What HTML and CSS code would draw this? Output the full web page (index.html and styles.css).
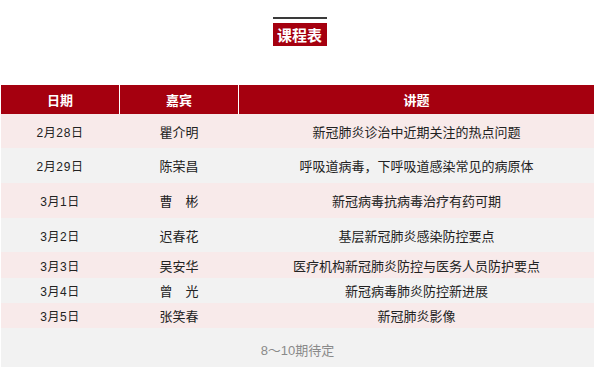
FILE: index.html
```html
<!DOCTYPE html>
<html lang="zh-CN">
<head>
<meta charset="utf-8">
<title>课程表</title>
<link rel="stylesheet" href="styles.css">
</head>
<body>
<div class="page">
  <div class="title-wrap">
    <div class="title-line"></div>
    <div class="title">课程表</div>
  </div>
  <div class="table">
    <div class="row head">
      <div class="cell">日期</div>
      <div class="cell">嘉宾</div>
      <div class="cell">讲题</div>
    </div>
    <div class="row pink tall">
      <div class="cell date">2月28日</div>
      <div class="cell name">瞿介明</div>
      <div class="cell topic">新冠肺炎诊治中近期关注的热点问题</div>
    </div>
    <div class="row grey taller">
      <div class="cell date">2月29日</div>
      <div class="cell name">陈荣昌</div>
      <div class="cell topic">呼吸道病毒，下呼吸道感染常见的病原体</div>
    </div>
    <div class="row pink taller">
      <div class="cell date">3月1日</div>
      <div class="cell name">曹　彬</div>
      <div class="cell topic">新冠病毒抗病毒治疗有药可期</div>
    </div>
    <div class="row grey tall">
      <div class="cell date">3月2日</div>
      <div class="cell name">迟春花</div>
      <div class="cell topic">基层新冠肺炎感染防控要点</div>
    </div>
    <div class="row pink mid">
      <div class="cell date">3月3日</div>
      <div class="cell name">吴安华</div>
      <div class="cell topic">医疗机构新冠肺炎防控与医务人员防护要点</div>
    </div>
    <div class="row grey short">
      <div class="cell date">3月4日</div>
      <div class="cell name">曾　光</div>
      <div class="cell topic">新冠病毒肺炎防控新进展</div>
    </div>
    <div class="row pink short">
      <div class="cell date">3月5日</div>
      <div class="cell name">张笑春</div>
      <div class="cell topic">新冠肺炎影像</div>
    </div>
    <div class="footer">8～10期待定</div>
  </div>
</div>
</body>
</html>
```

FILE: styles.css
```css
html, body {
  margin: 0;
  padding: 0;
  background: #ffffff;
}

.page {
  width: 599px;
  height: 380px;
  font-family: "Liberation Sans", "Noto Sans CJK SC", sans-serif;
  color: #222222;
}

.title-wrap {
  display: flex;
  flex-direction: column;
  align-items: center;
  padding-top: 17px;
  margin-left: 0;
}

.title-line {
  width: 54px;
  height: 2px;
  background: #3a3a3a;
}

.title {
  margin-top: 4px;
  width: 54px;
  height: 23px;
  background: #a5000f;
  color: #ffffff;
  font-family: "Noto Sans CJK SC", sans-serif;
  font-weight: bold;
  font-size: 15px;
  line-height: 23px;
  text-align: center;
}

.table {
  margin-top: 39px;
  margin-left: 1px;
  width: 593px;
}

.row {
  display: grid;
  grid-template-columns: 118px 118px 1fr;
  column-gap: 1px;
}

.cell {
  display: flex;
  align-items: center;
  justify-content: center;
  text-align: center;
}

.head {
  height: 29px;
  background: #ffffff;
}

.head .cell {
  background: #a5000f;
  color: #ffffff;
  font-family: "Noto Sans CJK SC", sans-serif;
  font-weight: bold;
  font-size: 13px;
}

.pink {
  background: #f8eaea;
}

.grey {
  background: #f2f2f2;
}

.tall {
  height: 34px;
}

.taller {
  height: 35px;
}

.mid {
  height: 26px;
}

.short {
  height: 25px;
}

.date {
  font-size: 12px;
  letter-spacing: 0.6px;
}

.name {
  font-family: "Noto Sans CJK SC", sans-serif;
  font-size: 13px;
}

.topic {
  font-family: "Noto Sans CJK SC", sans-serif;
  font-size: 13px;
}

.footer {
  height: 39px;
  background: #f2f2f2;
  display: flex;
  align-items: center;
  justify-content: center;
  padding-top: 3px;
  box-sizing: border-box;
  color: #8a8a8a;
  font-size: 13px;
  font-family: "Liberation Sans", "Noto Sans CJK SC", sans-serif;
}
```
